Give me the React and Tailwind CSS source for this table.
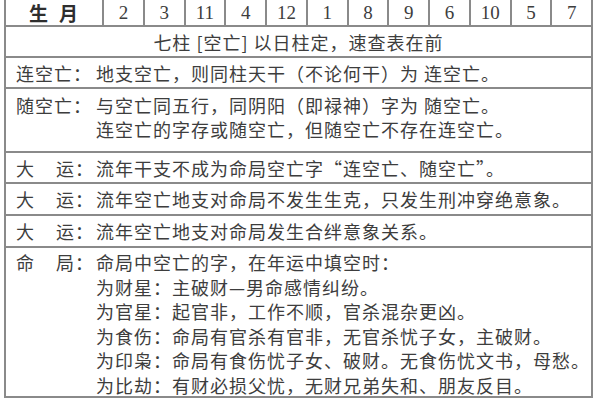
import React from 'react';

const months = ['2', '3', '11', '4', '12', '1', '8', '9', '6', '10', '5', '7'];

const Label = ({ a, b }) => (
  <div className="w-[80px] shrink-0 flex justify-between pr-[2px]">
    <span>{a}</span>
    <span>{b}</span>
  </div>
);

const Row = ({ label, children, className = '' }) => (
  <div className={`flex border-b-2 border-[#8a8a8a] pl-[10px] ${className}`}>
    {label}
    <div className="flex-1">{children}</div>
  </div>
);

const App = () => {
  return (
    <div
      className="w-[600px] h-[400px] bg-white overflow-hidden text-[#3d3d3d]"
      style={{ fontFamily: '"Noto Sans CJK SC", "Liberation Serif", serif' }}
    >
      <div className="ml-[4px] w-[589px] border-x-2 border-b-2 border-[#8a8a8a] text-[18px] tracking-[1px]">
        {/* header */}
        <div className="flex h-[27px] border-b-2 border-[#8a8a8a]">
          <div className="w-[96px] shrink-0 flex items-center justify-center gap-[10px] text-[19px] leading-[22px] font-bold text-[#2e2e2e]">
            <span>生</span>
            <span>月</span>
          </div>
          {months.map((m) => (
            <div
              key={m}
              className="flex-1 border-l-2 border-[#8a8a8a] flex items-center justify-center text-[19px] leading-[22px] tracking-normal"
              style={{ fontFamily: '"Liberation Serif", serif' }}
            >
              {m}
            </div>
          ))}
        </div>

        {/* title */}
        <div className="h-[31px] border-b-2 border-[#8a8a8a] flex items-center justify-center pt-[1px]">
          七柱 [空亡] 以日柱定，速查表在前
        </div>

        <Row className="h-[31px] items-center leading-[24px]" label={<Label a="连空亡：" b="" />}>
          地支空亡，则同柱天干（不论何干）为 连空亡。
        </Row>

        <Row className="h-[64px] pt-[4px] leading-[24px]" label={<Label a="随空亡：" b="" />}>
          <div>与空亡同五行，同阴阳（即禄神）字为 随空亡。</div>
          <div>连空亡的字存或随空亡，但随空亡不存在连空亡。</div>
        </Row>

        <Row className="h-[31px] items-center leading-[24px]" label={<Label a="大" b="运：" />}>
          流年干支不成为命局空亡字“连空亡、随空亡”。
        </Row>

        <Row className="h-[32px] items-center leading-[24px]" label={<Label a="大" b="运：" />}>
          流年空亡地支对命局不发生生克，只发生刑冲穿绝意象。
        </Row>

        <Row className="h-[32px] items-center leading-[24px]" label={<Label a="大" b="运：" />}>
          流年空亡地支对命局发生合绊意象关系。
        </Row>

        <div className="flex h-[148px] pt-[2px] pl-[10px] leading-[24.5px]">
          <Label a="命" b="局：" />
          <div className="flex-1">
            <div>命局中空亡的字，在年运中填空时：</div>
            <div>为财星：主破财—男命感情纠纷。</div>
            <div>为官星：起官非，工作不顺，官杀混杂更凶。</div>
            <div>为食伤：命局有官杀有官非，无官杀忧子女，主破财。</div>
            <div>为印枭：命局有食伤忧子女、破财。无食伤忧文书，母愁。</div>
            <div>为比劫：有财必损父忧，无财兄弟失和、朋友反目。</div>
          </div>
        </div>
      </div>
    </div>
  );
};

export default App;
